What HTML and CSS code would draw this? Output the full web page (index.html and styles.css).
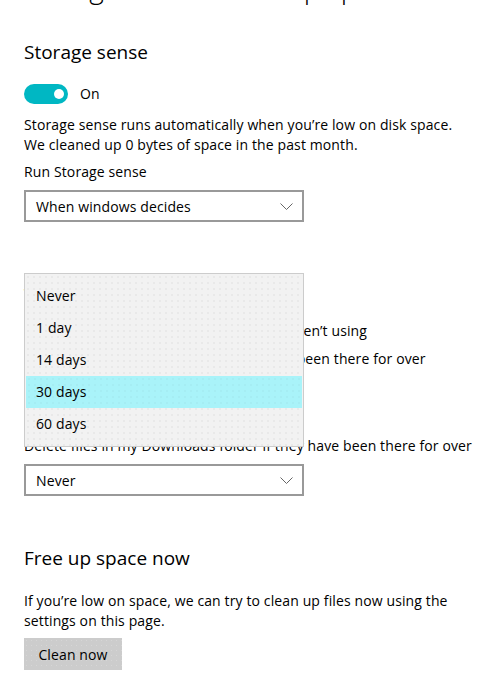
FILE: index.html
```html
<!DOCTYPE html>
<html lang="en">
<head>
<meta charset="utf-8">
<title>Storage sense</title>
<link rel="stylesheet" href="styles.css">
</head>
<body>
<main class="page">
  <h1 class="title">Change how we free up space</h1>

  <h2 class="heading first">Storage sense</h2>
  <div class="toggle-row">
    <span class="toggle"><span class="knob"></span></span>
    <span class="toggle-label">On</span>
  </div>
  <p class="text desc">Storage sense runs automatically when you’re low on disk space.<br>We cleaned up 0 bytes of space in the past month.</p>
  <div class="label">Run Storage sense</div>
  <div class="select">
    <span>When windows decides</span>
    <svg class="chev" width="13" height="7" viewBox="0 0 13 7"><path d="M0.5 0.5 L6.5 6.5 L12.5 0.5" fill="none" stroke="#666" stroke-width="1"/></svg>
  </div>

  <h3 class="subheading">Temporary Files</h3>
  <div class="check-row">
    <span class="checkbox"></span>
    <span>Delete temporary files that my apps aren’t using</span>
  </div>
  <div class="label gap-a">Delete files in my recycle bin if they have been there for over</div>
  <div class="select-wrap">
    <div class="select">
      <span>30 days</span>
      <svg class="chev" width="13" height="7" viewBox="0 0 13 7"><path d="M0.5 0.5 L6.5 6.5 L12.5 0.5" fill="none" stroke="#666" stroke-width="1"/></svg>
    </div>
    <ul class="popup">
      <li class="item">Never</li>
      <li class="item">1 day</li>
      <li class="item">14 days</li>
      <li class="item hover">30 days</li>
      <li class="item">60 days</li>
    </ul>
  </div>
  <div class="label gap-b">Delete files in my Downloads folder if they have been there for over</div>
  <div class="select">
    <span>Never</span>
    <svg class="chev" width="13" height="7" viewBox="0 0 13 7"><path d="M0.5 0.5 L6.5 6.5 L12.5 0.5" fill="none" stroke="#666" stroke-width="1"/></svg>
  </div>

  <h2 class="heading second">Free up space now</h2>
  <p class="text free">If you’re low on space, we can try to clean up files now using the<br>settings on this page.</p>
  <button class="btn" type="button">Clean now</button>
</main>
</body>
</html>
```

FILE: styles.css
```css
html, body {
  margin: 0;
  padding: 0;
  background: #fff;
}
body {
  font-family: "Open Sans", "Noto Sans", "Liberation Sans", sans-serif;
  font-size: 14px;
  letter-spacing: 0.12px;
  color: #000;
  overflow: hidden;
}
.page {
  padding: 0 24px;
  width: 447px;
}
.title {
  margin: -31px 0 0 0;
  font-size: 28px;
  font-weight: 300;
  line-height: 36px;
  letter-spacing: 0;
  white-space: nowrap;
}
.heading {
  margin: 0;
  font-size: 19px;
  font-weight: 400;
  line-height: 28px;
  letter-spacing: 0;
}
.heading.first { margin-top: 33px; }
.heading.second { margin-top: 48px; }
.toggle-row {
  display: flex;
  align-items: center;
  gap: 12px;
  margin-top: 18px;
  height: 20px;
}
.toggle {
  display: flex;
  align-items: center;
  justify-content: flex-end;
  width: 44px;
  height: 20px;
  border-radius: 10px;
  background: #00b7c3;
  padding-right: 4px;
  box-sizing: border-box;
}
.knob {
  width: 10px;
  height: 10px;
  border-radius: 50%;
  background: #fff;
}
.toggle-label { line-height: 20px; }
.text {
  margin: 0;
  line-height: 20px;
}
.desc { margin-top: 11px; }
.label {
  line-height: 20px;
  margin-top: 7px;
  margin-bottom: 8px;
  white-space: nowrap;
}
.label.gap-a { margin-top: 8px; }
.label.gap-b { margin-top: 27px; }
.select {
  display: flex;
  align-items: center;
  justify-content: space-between;
  width: 280px;
  height: 32px;
  box-sizing: border-box;
  border: 2px solid #999;
  padding: 0 9px 0 10px;
  background: #fff;
}
.chev { display: block; }
.subheading {
  margin: 62px 0 0 0;
  font-size: 14px;
  font-weight: 600;
  line-height: 20px;
}
.check-row {
  display: flex;
  align-items: center;
  gap: 8px;
  margin-top: 17px;
  line-height: 20px;
}
.checkbox {
  width: 16px;
  height: 16px;
  border: 2px solid #333;
  box-sizing: border-box;
}
.select-wrap { position: relative; }
.popup {
  position: absolute;
  left: 0;
  top: -104px;
  width: 280px;
  margin: 0;
  padding: 6px 0;
  list-style: none;
  box-sizing: border-box;
  border: 1px solid #cccccc;
  background-color: #f2f2f2;
  background-image: radial-gradient(circle, rgba(0,0,0,0.055) 0.6px, transparent 0.9px);
  background-size: 6px 6px;
  z-index: 2;
}
.item {
  height: 32px;
  line-height: 32px;
  padding-left: 10px;
  margin: 0 1px;
}
.item.hover {
  background-color: #a9f3f9;
  background-image: radial-gradient(circle, rgba(0,0,0,0.04) 0.6px, transparent 0.9px);
  background-size: 6px 6px;
}
.free { margin-top: 19px; }
.btn {
  display: block;
  margin-top: 7px;
  width: 98px;
  height: 32px;
  border: 0;
  padding: 0;
  background-color: #cccccc;
  background-image: radial-gradient(circle, rgba(255,255,255,0.2) 0.6px, transparent 0.9px);
  background-size: 5px 5px;
  font-family: inherit;
  font-size: 14px;
  letter-spacing: 0.12px;
  color: #000;
}
```
